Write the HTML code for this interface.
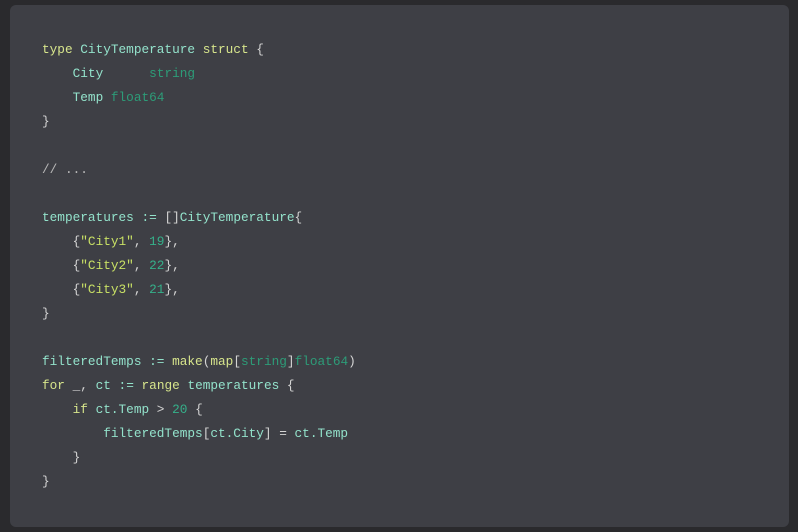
<!DOCTYPE html>
<html><head><meta charset="utf-8"><style>
html,body{margin:0;padding:0;background:#2a2a2d;width:798px;height:532px;overflow:hidden}
.p{position:absolute;left:10px;top:5px;width:779px;height:522px;background:#3e3f45;border-radius:6px}
pre{position:absolute;left:42px;top:38px;margin:0;font-family:"Liberation Mono",monospace;font-size:12.75px;line-height:24px;color:#d4d4d4;letter-spacing:0}
.k{color:#d7e58c}.i{color:#93e2cb}.t{color:#2d9c78}.n{color:#35b08a}.s{color:#c8e065}.c{color:#b8b8b8}
</style></head><body><div class="p"></div>
<pre><span class="k">type</span> <span class="i">CityTemperature</span> <span class="k">struct</span> {
    <span class="i">City</span>      <span class="t">string</span>
    <span class="i">Temp</span> <span class="t">float64</span>
}

<span class="c">// ...</span>

<span class="i">temperatures</span> <span class="i">:=</span> []<span class="i">CityTemperature</span>{
    {<span class="s">"City1"</span>, <span class="n">19</span>},
    {<span class="s">"City2"</span>, <span class="n">22</span>},
    {<span class="s">"City3"</span>, <span class="n">21</span>},
}

<span class="i">filteredTemps</span> <span class="i">:=</span> <span class="k">make</span>(<span class="k">map</span>[<span class="t">string</span>]<span class="t">float64</span>)
<span class="k">for</span> _, <span class="i">ct</span> <span class="i">:=</span> <span class="k">range</span> <span class="i">temperatures</span> {
    <span class="k">if</span> <span class="i">ct.Temp</span> &gt; <span class="n">20</span> {
        <span class="i">filteredTemps</span>[<span class="i">ct.City</span>] = <span class="i">ct.Temp</span>
    }
}</pre>
</body></html>
